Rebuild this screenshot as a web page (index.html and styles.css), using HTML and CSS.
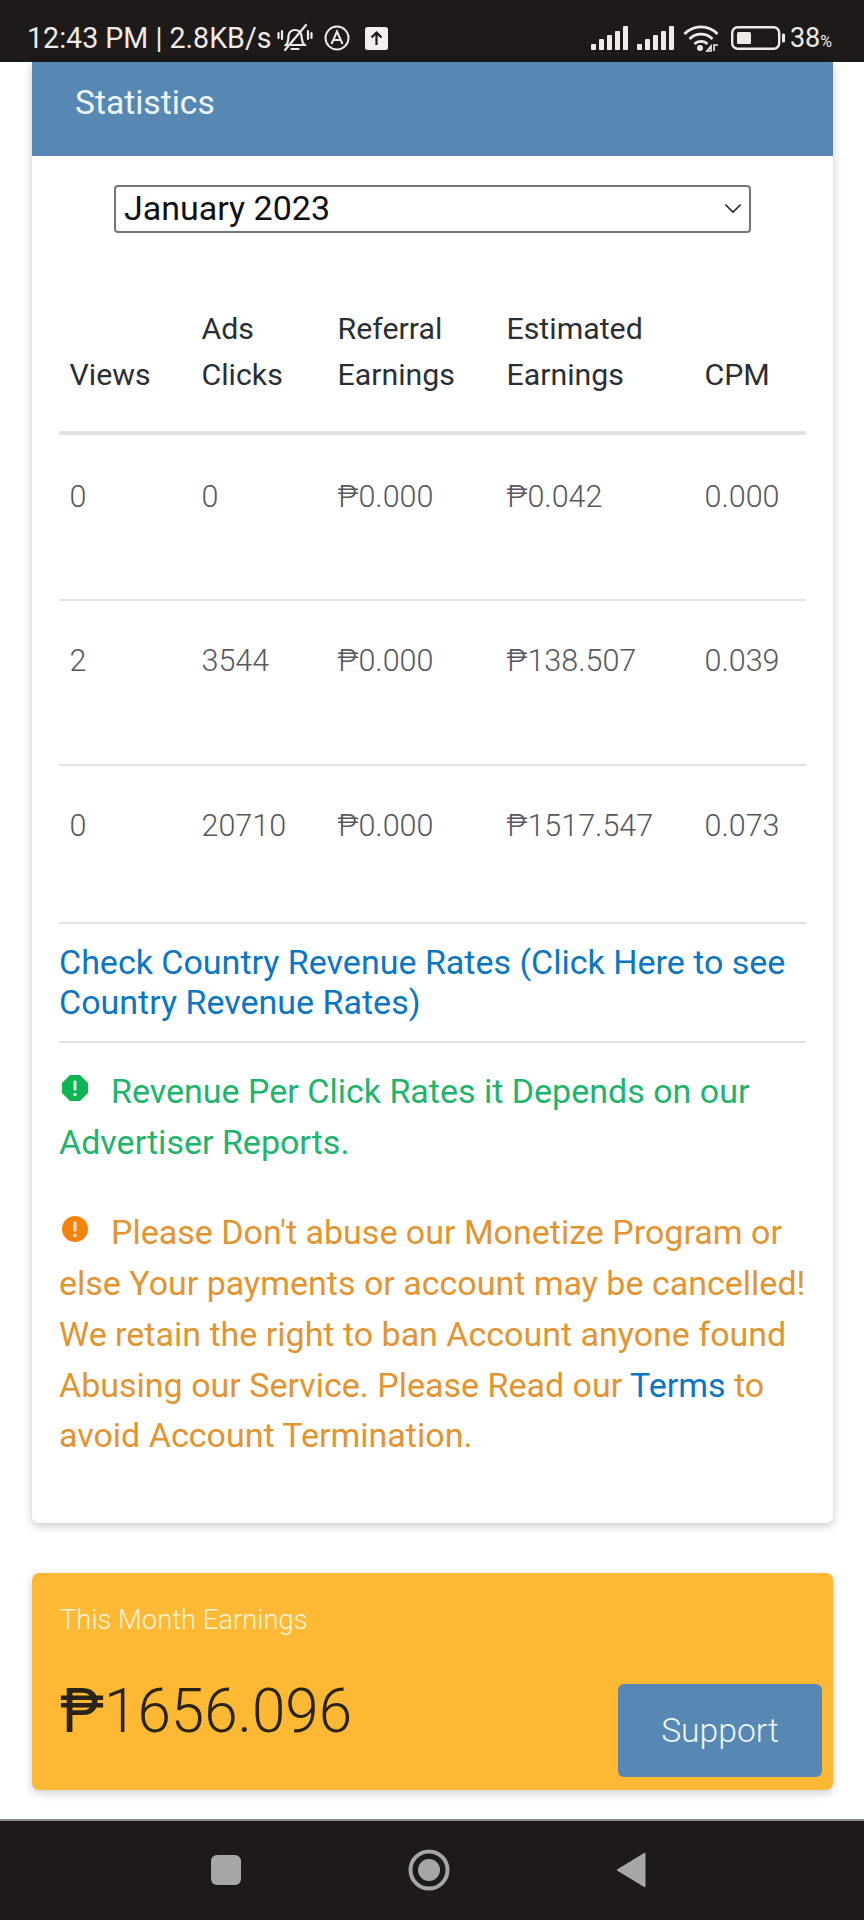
FILE: index.html
```html
<!DOCTYPE html>
<html lang="en">
<head>
<meta charset="utf-8">
<title>Statistics</title>
<link rel="stylesheet" href="styles.css">
</head>
<body>
<div class="phone">
  <header class="status">
    <div class="status-left">
      <span class="clock">12:43 PM | 2.8KB/s</span>
      <svg class="ic-bell" viewBox="0 0 36 30" width="36" height="30"><g fill="none" stroke="#eeeae8" stroke-width="2.2" stroke-linecap="round"><path d="M9 22c3-3 2-5 2.500-9 .5-4 3-6 6.500-6s6 2 6.500 6c.5 4 0 6 3 9z"/><path d="M14.500 26h7"/><path d="M1.500 10v5M5 8v8M31 8v8M34.500 10v5"/><path d="M8 27L29 2"/></g></svg>
      <svg class="ic-a" viewBox="0 0 26 26" width="26" height="26"><circle cx="13" cy="13" r="11.500" fill="none" stroke="#eeeae8" stroke-width="2"/><path d="M7.500 19L13 6.500 18.500 19M9.500 15h7" fill="none" stroke="#eeeae8" stroke-width="2"/></svg>
      <svg class="ic-up" viewBox="0 0 23 23" width="23" height="23"><rect width="23" height="23" rx="2.500" fill="#f2efee"/><path d="M11.500 18V6M6.500 10.500l5-5 5 5" fill="none" stroke="#1e1a1a" stroke-width="2.200"/></svg>
    </div>
    <div class="status-right">
      <svg class="ic-sig" viewBox="0 0 37 24" width="37" height="24"><g fill="#eeeae8"><rect x="0" y="18" width="5" height="6" rx="1"/><rect x="8" y="13" width="5" height="11" rx="1"/><rect x="16" y="9" width="5" height="15" rx="1"/><rect x="24" y="5" width="5" height="19" rx="1"/><rect x="32" y="0" width="5" height="24" rx="1"/></g></svg>
      <svg class="ic-sig" viewBox="0 0 37 24" width="37" height="24"><g fill="#eeeae8"><rect x="0" y="18" width="5" height="6" rx="1"/><rect x="8" y="13" width="5" height="11" rx="1"/><rect x="16" y="9" width="5" height="15" rx="1"/><rect x="24" y="5" width="5" height="19" rx="1"/><rect x="32" y="0" width="5" height="24" rx="1"/></g></svg>
      <svg class="ic-wifi" viewBox="0 0 36 28" width="36" height="28"><g fill="none" stroke="#eeeae8" stroke-width="2.800"><path d="M1.500 10C10.500 .5 25.500 .5 34.500 10"/><path d="M6.500 15c6.500-6.500 16.500-6.500 23 0"/><path d="M11.500 20c3.500-3.500 9.500-3.500 13 0"/></g><circle cx="17" cy="24" r="3" fill="#eeeae8"/><path d="M24 27l4-5v5zM31 27v-6h4" fill="none" stroke="#eeeae8" stroke-width="1.600"/></svg>
      <svg class="ic-batt" viewBox="0 0 54 24" width="54" height="24"><rect x="1.200" y="1.200" width="47" height="21.600" rx="5.500" fill="none" stroke="#eeeae8" stroke-width="2.400"/><rect x="6" y="6" width="14" height="12" rx="1.500" fill="#eeeae8"/><rect x="51" y="7.500" width="3" height="9" rx="1.200" fill="#eeeae8"/></svg>
      <span class="pct">38<small>%</small></span>
    </div>
  </header>

  <main class="page">
    <section class="card">
      <h2 class="card-title">Statistics</h2>
      <div class="card-body">
        <div class="select-box">
          <span>January 2023</span>
          <svg viewBox="0 0 20 12" width="18" height="11"><path d="M1.500 1.500L10 10l8.500-8.500" fill="none" stroke="#222" stroke-width="1.700"/></svg>
        </div>
        <table class="stats">
          <colgroup><col class="c1"><col class="c2"><col class="c3"><col class="c4"><col class="c5"></colgroup>
          <thead>
            <tr><th>Views</th><th>Ads Clicks</th><th>Referral Earnings</th><th>Estimated Earnings</th><th>CPM</th></tr>
          </thead>
          <tbody>
            <tr class="first"><td>0</td><td>0</td><td>₱0.000</td><td>₱0.042</td><td>0.000</td></tr>
            <tr><td>2</td><td>3544</td><td>₱0.000</td><td>₱138.507</td><td>0.039</td></tr>
            <tr class="last"><td>0</td><td>20710</td><td>₱0.000</td><td>₱1517.547</td><td>0.073</td></tr>
          </tbody>
        </table>
        <p class="rates"><a href="#">Check Country Revenue Rates (Click Here to see Country Revenue Rates)</a></p>
        <p class="note green"><svg class="ni" viewBox="0 0 26 26" width="26" height="26"><path d="M8 0h10l8 8v10l-8 8H8l-8-8V8z" fill="#0cb552"/><rect x="11.500" y="5.500" width="3" height="10" rx="1.200" fill="#d8f5e4"/><circle cx="13" cy="19.500" r="1.800" fill="#d8f5e4"/></svg>Revenue Per Click Rates it Depends on our Advertiser Reports.</p>
        <p class="note orange"><svg class="ni" viewBox="0 0 26 26" width="26" height="26"><circle cx="13" cy="13" r="13" fill="#f5820d"/><rect x="11.500" y="5.500" width="3" height="10" rx="1.200" fill="#fde6cc"/><circle cx="13" cy="19.500" r="1.800" fill="#fde6cc"/></svg>Please Don't abuse our Monetize Program or else Your payments or account may be cancelled! We retain the right to ban Account anyone found Abusing our Service. Please Read our <a href="#">Terms</a> to avoid Account Termination.</p>
      </div>
    </section>

    <section class="earn">
      <div class="earn-main">
        <div class="earn-label">This Month Earnings</div>
        <div class="earn-value"><span class="peso">₱</span>1656.096</div>
      </div>
      <a class="support" href="#">Support</a>
    </section>
  </main>

  <footer class="nav">
    <svg viewBox="0 0 32 32" width="32" height="32"><rect width="30" height="30" x="1" y="1" rx="6" fill="#a8a5a6"/></svg>
    <svg viewBox="0 0 42 42" width="42" height="42"><circle cx="21" cy="21" r="18.500" fill="none" stroke="#a8a5a6" stroke-width="4"/><circle cx="21" cy="21" r="11" fill="#a8a5a6"/></svg>
    <svg viewBox="0 0 32 36" width="32" height="36"><path d="M30 1v34L2 18z" fill="#a8a5a6" stroke="#a8a5a6" stroke-linejoin="round"/></svg>
  </footer>
</div>
</body>
</html>
```
FILE: styles.css
```css
* { box-sizing: border-box; }
html, body { margin: 0; padding: 0; }
body { background: #fff; font-family: Roboto, "Liberation Sans", sans-serif; }
.phone { width: 864px; height: 1920px; display: flex; flex-direction: column; overflow: hidden; background: #fff; }

.status { height: 62px; flex: none; background: #1e1a1a; color: #eeeae8; display: flex; justify-content: space-between; align-items: center; padding: 14px 32px 0 27px; }
.status-left, .status-right { display: flex; align-items: center; }
.clock { font-size: 28.600px; margin-right: 6px; }
.ic-a { margin-left: 11px; }
.ic-up { margin-left: 15px; }
.ic-sig { margin-right: 9px; }
.ic-wifi { margin-right: 12px; }
.pct { font-size: 27px; margin-left: 5px; }
.pct small { font-size: 16px; }

.page { flex: 1; min-height: 0; padding: 0 31px 0 32px; }
.card { background: #fff; border-radius: 0 0 7px 7px; box-shadow: 0 3px 10px rgba(0,0,0,.22); }
.card-title { margin: 0; height: 94px; background: #5788b4; color: #eef6fb; font-size: 33.600px; font-weight: 400; line-height: 82px; padding-left: 43px; }
.card-body { padding: 29px 27px 62px; }

.select-box { width: 637px; height: 48px; margin: 0 0 0 55px; border: 2px solid #767676; border-radius: 4px; display: flex; align-items: center; justify-content: space-between; padding: 0 7px 2px 8px; font-size: 34px; color: #111; }

.stats { width: 747px; margin-top: 73px; border-collapse: collapse; table-layout: fixed; color: #2b2f33; font-size: 30.300px; line-height: 46px; }
.c1 { width: 132px; } .c2 { width: 136px; } .c3 { width: 169px; } .c4 { width: 198px; } .c5 { width: 112px; }
.stats th { font-weight: 400; text-align: left; vertical-align: bottom; padding: 0 11px 33px 10.500px; border-bottom: 4px solid #dee2e6; }
.stats td { height: 165px; padding: 37px 11px 0 10.500px; vertical-align: top; font-size: 30.500px; color: #55595d; font-weight: 300; border-bottom: 2px solid #dee2e6; white-space: nowrap; }
.stats tr.first td { height: 167px; padding-top: 39px; }
.stats tr.last td { height: 158px; }

.rates { margin: 0; padding: 18px 0 19px; border-bottom: 2px solid #dee2e6; font-size: 34px; line-height: 40px; }
a { color: #0a76c4; text-decoration: none; }

.note { margin: 0 0 40px; font-size: 34px; line-height: 50.700px; }
.green { color: #1eb46c; padding-top: 23px; }
.orange { color: #e29431; margin-bottom: 0; }
.ni { margin: 0 23px 0 3px; vertical-align: 2px; }

.earn { margin-top: 50px; height: 217px; background: #fdb933; border-radius: 7px; box-shadow: 0 3px 10px rgba(0,0,0,.2); display: flex; justify-content: space-between; align-items: flex-end; padding: 0 11px 13px 28px; }
.earn-label { color: #fdf3dc; font-size: 27.400px; font-weight: 300; }
.earn-main { align-self: flex-start; padding-top: 31px; }
.earn-value { color: #2a2418; font-size: 60.200px; font-weight: 300; margin-top: 40px; }
.peso { font-weight: 400; }
.support { width: 204px; height: 93px; background: #5788b4; color: #eef6fb; border-radius: 6px; font-size: 33.700px; font-weight: 300; display: flex; align-items: center; justify-content: center; }

.nav { height: 101px; flex: none; background: #1e1a1a; border-top: 2px solid #8a8888; display: flex; align-items: center; justify-content: space-between; padding: 0 217px 2px 210px; }
```
